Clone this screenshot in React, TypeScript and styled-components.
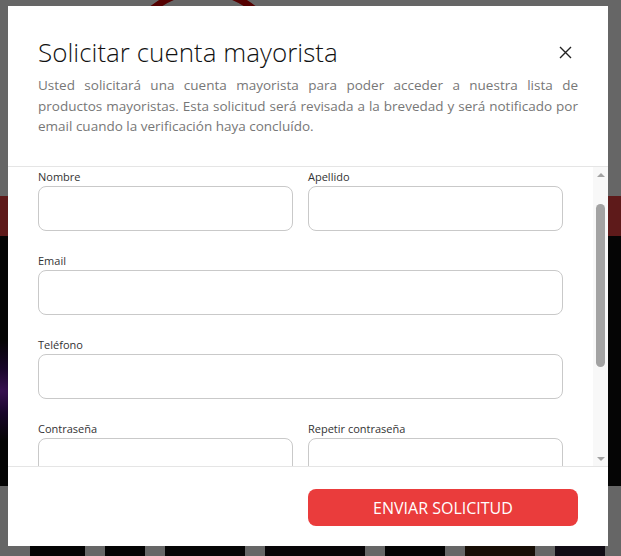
import * as React from "react";
import {useEffect, useRef} from "react";
import styled, {createGlobalStyle} from "styled-components";

const GlobalStyle = createGlobalStyle`
    html, body {
        margin: 0;
        padding: 0;
    }
    body {
        font-family: "Open Sans", "Noto Sans", sans-serif;
        background: #fff;
        overflow: hidden;
    }
    * {
        box-sizing: border-box;
    }
`;

// background page
const Page = styled.div`
    width: 621px;
    height: 556px;
    overflow: hidden;
    display: flex;
    flex-direction: column;
`;

const SiteHeader = styled.header`
    height: 196px;
    background: #fff;
    padding-left: 120px;
`;

const NavBar = styled.nav`
    height: 40px;
    background: #eb4141;
    display: flex;
    align-items: center;
    justify-content: center;
    gap: 40px;
    color: #fff;
    font-size: 14px;
    font-weight: 600;
`;

const Hero = styled.section`
    height: 250px;
    background:
        radial-gradient(ellipse 120px 50px at 0% 62%, #8a2ac8 0%, #3d0f66 45%, transparent 100%),
        #0e0e0e;
`;

const Cards = styled.div`
    flex: 1;
    background: #fff;
    display: flex;
    gap: 20px;
    padding: 4px 0 0 30px;
`;

const CardImage = styled.div<{$tone: string; $width: number}>`
    width: ${({$width}) => $width}px;
    background: ${({$tone}) => $tone};
`;

// modal
const Overlay = styled.div`
    position: fixed;
    inset: 0;
    background: rgba(0, 0, 0, 0.6);
    padding: 6px 0 0 8px;
`;

const Modal = styled.div`
    width: 600px;
    height: 540px;
    background: #fff;
    display: flex;
    flex-direction: column;
`;

const Header = styled.div`
    height: 161px;
    padding: 31px 30px 0;
    border-bottom: 1px solid #e5e5e5;
`;

const TitleRow = styled.div`
    display: flex;
    justify-content: space-between;
    align-items: center;
`;

const Title = styled.h2`
    margin: 0;
    font-family: "Open Sans Light", "Open Sans", sans-serif;
    font-size: 26px;
    line-height: 31px;
    font-weight: 300;
    color: #111;
`;

const Close = styled.button`
    border: 0;
    background: none;
    padding: 0;
    margin-right: 6px;
    width: 13px;
    height: 13px;
    display: flex;
    cursor: pointer;
`;

const Description = styled.p`
    margin: 7px 0 0;
    font-size: 13.5px;
    line-height: 20.5px;
    color: #777;
    text-align: justify;
`;

const Body = styled.div`
    flex: 1;
    min-height: 0;
    display: flex;
`;

const ScrollArea = styled.div`
    flex: 1;
    overflow: hidden;
`;

const ScrollTrack = styled.div`
    width: 15px;
    background: #f8f8f8;
    display: flex;
    flex-direction: column;
    align-items: center;
`;

const Arrow = styled.div<{$down?: boolean}>`
    height: 15px;
    width: 15px;
    display: flex;
    align-items: center;
    justify-content: center;

    &::before {
        content: "";
        border-left: 4px solid transparent;
        border-right: 4px solid transparent;
        ${({$down}) => ($down ? "border-top" : "border-bottom")}: 4px solid #a3a3a3;
    }
`;

const Rail = styled.div`
    flex: 1;
    padding-top: 22px;
`;

const Thumb = styled.div`
    width: 9px;
    height: 163px;
    border-radius: 5px;
    background: #a3a3a3;
`;

const Form = styled.form`
    display: grid;
    grid-template-columns: 1fr 1fr;
    column-gap: 15px;
    row-gap: 22px;
    padding: 42px 30px 137px;
`;

const Field = styled.div<{$wide?: boolean}>`
    grid-column: ${({$wide}) => ($wide ? "span 2" : "span 1")};
    display: flex;
    flex-direction: column;
    gap: 2px;
`;

const Label = styled.label`
    font-size: 11px;
    line-height: 15px;
    color: #333;
`;

const Input = styled.input`
    height: 45px;
    border: 1px solid #c9c9c9;
    border-radius: 8px;
    padding: 0 12px;
    font-family: inherit;
    font-size: 14px;
    outline: none;
`;

const Footer = styled.div`
    height: 80px;
    border-top: 1px solid #e5e5e5;
    padding: 22px 30px 20px;
    display: flex;
    justify-content: flex-end;
`;

const Submit = styled.button`
    width: 270px;
    height: 37px;
    border: 0;
    border-radius: 8px;
    background: #ea3c3c;
    color: #fff;
    font-family: "Open Sans", sans-serif;
    font-size: 16px;
    cursor: pointer;
`;

const fields = [
    {id: "nombre", label: "Nombre"},
    {id: "apellido", label: "Apellido"},
    {id: "email", label: "Email", wide: true, type: "email"},
    {id: "telefono", label: "Teléfono", wide: true, type: "tel"},
    {id: "password", label: "Contraseña", type: "password"},
    {id: "password2", label: "Repetir contraseña", type: "password"},
];

const cardTones = [
    {tone: "#0c0c0c", width: 55},
    {tone: "#0c0c0c", width: 40},
    {tone: "#101010", width: 80},
    {tone: "#141014", width: 100},
    {tone: "#0a0a0a", width: 60},
    {tone: "#3a2410", width: 70},
    {tone: "#2b2036", width: 50},
];

const App: React.FC = (): JSX.Element => {
    const scrollRef = useRef<HTMLDivElement>(null);

    useEffect(() => {
        if (scrollRef.current) {
            scrollRef.current.scrollTop = 40;
        }
    }, []);

    return (
        <>
            <GlobalStyle />
            <Page>
                <SiteHeader>
                    <svg width="170" height="160" viewBox="0 0 170 160">
                        <circle cx="83" cy="71" r="80" fill="none" stroke="#d40000" strokeWidth="7" />
                    </svg>
                </SiteHeader>
                <NavBar>
                    <span>INICIO</span>
                    <span>PRODUCTOS</span>
                    <span>CONTACTO</span>
                </NavBar>
                <Hero />
                <Cards>
                    {cardTones.map((c, i) => (
                        <CardImage key={i} $tone={c.tone} $width={c.width} />
                    ))}
                </Cards>
            </Page>
            <Overlay>
                <Modal>
                    <Header>
                        <TitleRow>
                            <Title>Solicitar cuenta mayorista</Title>
                            <Close aria-label="Cerrar">
                                <svg width="13" height="13" viewBox="0 0 13 13">
                                    <path d="M1 1L12 12M12 1L1 12" stroke="#222" strokeWidth="1.4" />
                                </svg>
                            </Close>
                        </TitleRow>
                        <Description>
                            Usted solicitará una cuenta mayorista para poder acceder a nuestra lista de
                            productos mayoristas. Esta solicitud será revisada a la brevedad y será
                            notificado por email cuando la verificación haya concluído.
                        </Description>
                    </Header>
                    <Body>
                        <ScrollArea ref={scrollRef}>
                            <Form>
                                {fields.map((f) => (
                                    <Field key={f.id} $wide={f.wide}>
                                        <Label htmlFor={f.id}>{f.label}</Label>
                                        <Input id={f.id} type={f.type || "text"} />
                                    </Field>
                                ))}
                            </Form>
                        </ScrollArea>
                        <ScrollTrack>
                            <Arrow />
                            <Rail>
                                <Thumb />
                            </Rail>
                            <Arrow $down />
                        </ScrollTrack>
                    </Body>
                    <Footer>
                        <Submit>ENVIAR SOLICITUD</Submit>
                    </Footer>
                </Modal>
            </Overlay>
        </>
    );
}

export default App;
